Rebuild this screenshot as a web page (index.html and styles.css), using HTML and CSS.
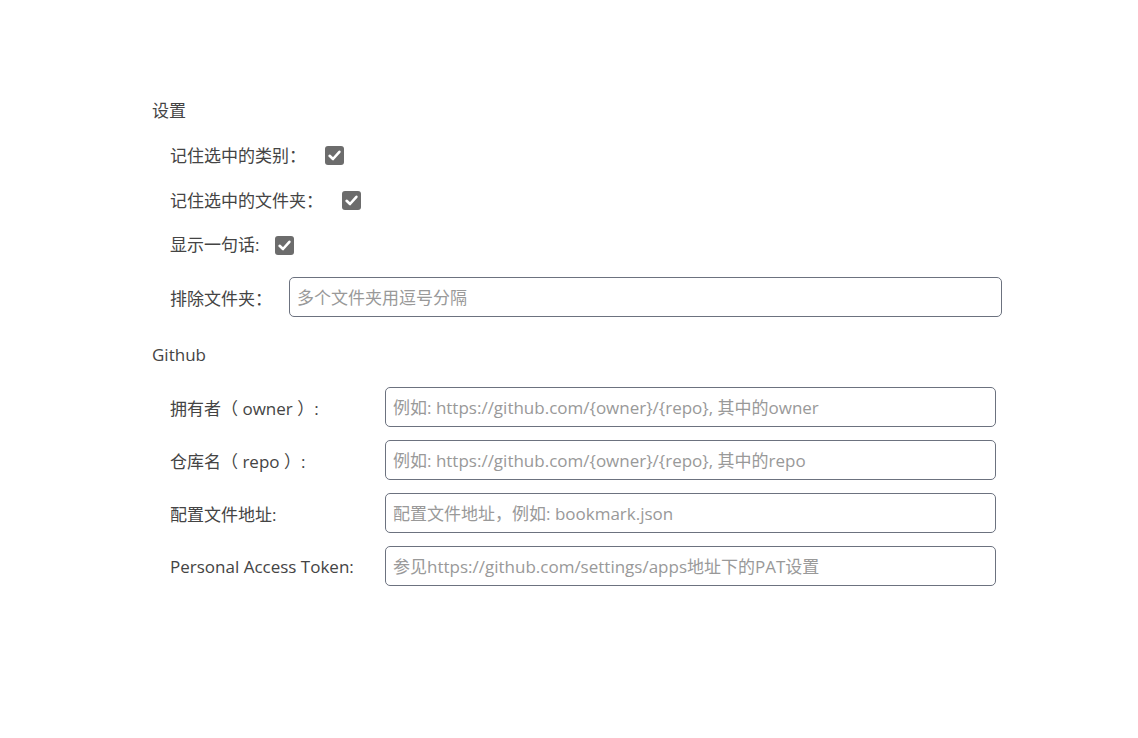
FILE: index.html
```html
<!DOCTYPE html>
<html lang="zh-CN">
<head>
<meta charset="utf-8">
<title>设置</title>
<link rel="stylesheet" href="styles.css">
</head>
<body>
<div class="page">
  <div class="section-title">设置</div>
  <div class="settings">
    <label class="check-row">
      <span class="label-text">记住选中的类别<span class="fw">：</span></span>
      <span class="checkbox"><svg viewBox="0 0 19 19" width="19" height="19"><path d="M4.6 9.8 L8 13 L14.4 5.8" fill="none" stroke="#fff" stroke-width="2.6" stroke-linecap="round" stroke-linejoin="round"/></svg></span>
    </label>
    <label class="check-row">
      <span class="label-text">记住选中的文件夹<span class="fw">：</span></span>
      <span class="checkbox"><svg viewBox="0 0 19 19" width="19" height="19"><path d="M4.6 9.8 L8 13 L14.4 5.8" fill="none" stroke="#fff" stroke-width="2.6" stroke-linecap="round" stroke-linejoin="round"/></svg></span>
    </label>
    <label class="check-row">
      <span class="label-text">显示一句话:</span>
      <span class="checkbox short"><svg viewBox="0 0 19 19" width="19" height="19"><path d="M4.6 9.8 L8 13 L14.4 5.8" fill="none" stroke="#fff" stroke-width="2.6" stroke-linecap="round" stroke-linejoin="round"/></svg></span>
    </label>
    <div class="exclude-row">
      <span class="label-text">排除文件夹<span class="fw">：</span></span>
      <input class="text-input" type="text" placeholder="多个文件夹用逗号分隔">
    </div>
  </div>

  <div class="section-title github-title">Github</div>
  <div class="github">
    <div class="field-row">
      <span class="field-label">拥有者（ owner ）:</span>
      <input class="text-input gh-input" type="text" placeholder="例如: https://github.com/{owner}/{repo}, 其中的owner">
    </div>
    <div class="field-row">
      <span class="field-label">仓库名（ repo ）:</span>
      <input class="text-input gh-input" type="text" placeholder="例如: https://github.com/{owner}/{repo}, 其中的repo">
    </div>
    <div class="field-row">
      <span class="field-label">配置文件地址:</span>
      <input class="text-input gh-input" type="text" placeholder="配置文件地址，例如: bookmark.json">
    </div>
    <div class="field-row">
      <span class="field-label">Personal Access Token:</span>
      <input class="text-input gh-input" type="text" placeholder="参见https://github.com/settings/apps地址下的PAT设置">
    </div>
  </div>
</div>
</body>
</html>
```

FILE: styles.css
```css
html, body {
  margin: 0;
  padding: 0;
  background: #fff;
}

body {
  font-family: "Open Sans", "Noto Sans CJK SC", sans-serif;
  font-size: 17px;
  color: #444;
}

.page {
  padding: 100px 0 0 152px;
}

.section-title {
  line-height: 22px;
  height: 22px;
}

.settings {
  margin-left: 18px;
  margin-top: 22px;
  display: flex;
  flex-direction: column;
}

.check-row {
  display: flex;
  align-items: center;
  height: 22px;
  margin-bottom: 23px;
}

.check-row .label-text {
  line-height: 22px;
}

.fw {
  font-family: "Noto Sans CJK TC", "Noto Sans CJK SC", sans-serif;
}

.checkbox {
  width: 19px;
  height: 19px;
  border-radius: 3px;
  background: #6c6c6c;
  margin-left: 19px;
  display: inline-flex;
}

.checkbox.short {
  margin-left: 16px;
}

.exclude-row {
  display: flex;
  align-items: center;
  width: 832px;
  margin-top: -2px;
}

.exclude-row .label-text {
  margin-right: 17px;
}

.text-input {
  flex: 1;
  height: 40px;
  box-sizing: border-box;
  border: 1px solid #6c727f;
  border-radius: 5px;
  padding: 0 7px;
  font-family: "Open Sans", "Noto Sans CJK SC", sans-serif;
  font-size: 17px;
  color: #444;
  background: #fff;
  outline: none;
}

.text-input::placeholder {
  color: #999;
}

.github-title {
  margin-top: 27px;
}

.github {
  margin-left: 18px;
  margin-top: 21px;
  display: flex;
  flex-direction: column;
  gap: 13px;
}

.field-row {
  display: flex;
  align-items: center;
}

.field-label {
  width: 215px;
  flex: none;
}

.gh-input {
  flex: none;
  width: 611px;
}
```
